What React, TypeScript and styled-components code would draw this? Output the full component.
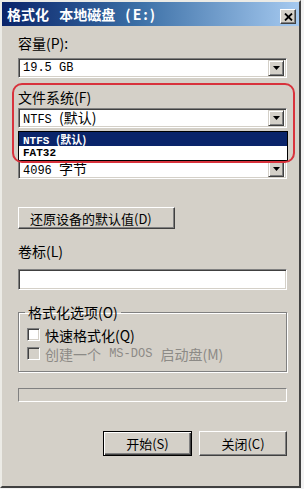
import React from 'react';
import styled, { createGlobalStyle } from 'styled-components';

const CJK = `"Noto Sans CJK SC", "Liberation Sans", sans-serif`;
const MONO = `"Liberation Mono", "Noto Sans CJK SC", monospace`;

const Global = createGlobalStyle`
  html, body { margin: 0; padding: 0; background: #f2f2f2; }
  body { width: 304px; height: 489px; overflow: hidden; }
`;

const Window = styled.div`
  position: relative;
  box-sizing: border-box;
  width: 301px;
  height: 488px;
  background: #d4d0c8;
  border: 2px solid;
  border-color: #ecebe6 #404040 #404040 #ecebe6;
  display: flex;
  flex-direction: column;
  font-family: ${CJK};
  font-size: 14px;
  color: #000;
`;

const TitleBar = styled.div`
  height: 24px;
  display: flex;
  align-items: center;
  justify-content: space-between;
  padding: 0 3px 0 5px;
  background: linear-gradient(to right, #0a246a 0%, #3a6ea5 45%, #a6caf0 100%);
`;

const Title = styled.span`
  color: #fff;
  font-weight: bold;
  font-size: 14px;
  line-height: 24px;
  white-space: pre;
  word-spacing: 7px;
`;

const TitleDrive = styled.span`
  letter-spacing: 2px;
`;

const CloseButton = styled.div`
  box-sizing: border-box;
  width: 16px;
  height: 15px;
  margin-top: 5px;
  background: #d4d0c8;
  border: 1px solid;
  border-color: #fff #404040 #404040 #fff;
  box-shadow: inset -1px -1px #808080;
  display: flex;
  align-items: center;
  justify-content: center;
`;

const Content = styled.div`
  display: flex;
  flex-direction: column;
  padding: 0 12px 0 16px;
`;

const Label = styled.div<{ $mt: number }>`
  margin-top: ${(p) => p.$mt}px;
  height: 16px;
  line-height: 16px;
  font-size: 14px;
  white-space: pre;
`;

const Spacer = styled.div<{ $h: number }>`
  height: ${(p) => p.$h}px;
`;

const Sunken = styled.div`
  box-sizing: border-box;
  border: 1px solid;
  border-color: #808080 #fff #fff #808080;
  box-shadow: inset 1px 1px #404040, inset -1px -1px #d4d0c8;
  background: #fff;
`;

const ComboBox = styled(Sunken)<{ $mt: number }>`
  position: relative;
  margin-top: ${(p) => p.$mt}px;
  height: 20px;
  display: flex;
  align-items: center;
  padding: 2px 2px 2px 4px;
`;

const ComboText = styled.span`
  flex: 1;
  font-family: ${MONO};
  font-size: 12px;
  line-height: 16px;
  white-space: pre;
`;

const Cjk = styled.span<{ $size?: number }>`
  font-family: ${CJK};
  font-size: ${(p) => p.$size ?? 14}px;
`;

const DropButton = styled.div`
  box-sizing: border-box;
  width: 16px;
  height: 16px;
  background: #d4d0c8;
  border: 1px solid;
  border-color: #d4d0c8 #404040 #404040 #d4d0c8;
  box-shadow: inset 1px 1px #fff, inset -1px -1px #808080;
  display: flex;
  align-items: center;
  justify-content: center;
`;

const DropList = styled.div`
  position: absolute;
  left: -1px;
  right: -2px;
  top: 22px;
  z-index: 2;
  background: #fff;
  border: 1px solid #000;
  display: flex;
  flex-direction: column;
`;

const ListRow = styled.div<{ $selected?: boolean }>`
  height: 14px;
  line-height: 14px;
  padding-left: 4px;
  background: ${(p) => (p.$selected ? '#0a246a' : '#fff')};
  color: ${(p) => (p.$selected ? '#fff' : '#000')};
  font-family: ${MONO};
  font-size: 11px;
  font-weight: bold;
  white-space: pre;
`;

const Button = styled.div<{ $mt?: number; $w: number; $h: number; $default?: boolean }>`
  box-sizing: border-box;
  margin-top: ${(p) => p.$mt ?? 0}px;
  width: ${(p) => p.$w}px;
  height: ${(p) => p.$h}px;
  background: #d4d0c8;
  border: 1px solid;
  border-color: ${(p) => (p.$default ? '#000' : '#fff #404040 #404040 #fff')};
  box-shadow: ${(p) =>
    p.$default
      ? 'inset 1px 1px #fff, inset -1px -1px #404040, inset -2px -2px #808080'
      : 'inset -1px -1px #808080'};
  display: flex;
  align-items: center;
  justify-content: center;
  font-size: 13px;
  white-space: pre;
`;

const ResetButton = styled(Button)`
  justify-content: flex-start;
  padding-left: 11px;
`;

const TextInput = styled(Sunken)`
  margin-top: 10px;
  height: 21px;
`;

const GroupBox = styled.fieldset`
  box-sizing: border-box;
  margin: 14px 0 0;
  height: 68px;
  padding: 6px 8px 0 8px;
  border: 1px solid #808080;
  box-shadow: inset 1px 1px #fff, 1px 1px #fff;
  display: flex;
  flex-direction: column;
`;

const Legend = styled.legend`
  padding: 0 3px;
  margin-left: -2px;
  height: 16px;
  line-height: 16px;
  font-size: 14px;
`;

const CheckRow = styled.div<{ $disabled?: boolean; $mt: number }>`
  margin-top: ${(p) => p.$mt}px;
  height: 17px;
  display: flex;
  align-items: center;
  gap: 5px;
  color: ${(p) => (p.$disabled ? '#8c8a86' : '#000')};
  white-space: pre;
`;

const CheckBox = styled.div<{ $disabled?: boolean }>`
  box-sizing: border-box;
  width: 13px;
  height: 13px;
  border: 1px solid;
  border-color: #808080 #fff #fff #808080;
  box-shadow: inset 1px 1px #404040, inset -1px -1px #d4d0c8;
  background: ${(p) => (p.$disabled ? '#d4d0c8' : '#fff')};
`;

const Mono = styled.span`
  font-family: ${MONO};
  font-size: 12px;
`;

const Progress = styled.div`
  box-sizing: border-box;
  margin-top: 16px;
  height: 14px;
  border: 1px solid;
  border-color: #808080 #fff #fff #808080;
  background: #d4d0c8;
`;

const ButtonRow = styled.div`
  margin-top: 29px;
  display: flex;
  justify-content: flex-end;
  gap: 7px;
`;

const Annotation = styled.div`
  position: absolute;
  left: 10px;
  top: 81px;
  width: 283px;
  height: 80px;
  box-sizing: border-box;
  border: 2px solid #d8323c;
  border-radius: 10px;
  z-index: 3;
  pointer-events: none;
`;

const Arrow = () => (
  <svg width="7" height="4" viewBox="0 0 7 4">
    <path d="M0 0H7L3.5 4Z" fill="#000" />
  </svg>
);

const CloseX = () => (
  <svg width="9" height="8" viewBox="0 0 9 8">
    <path d="M1 0.5L8 7.5M8 0.5L1 7.5" stroke="#000" strokeWidth="1.8" />
  </svg>
);

export default function App() {
  return (
    <>
      <Global />
      <Window>
        <TitleBar>
          <Title>
            格式化 本地磁盘 <TitleDrive>(E:)</TitleDrive>
          </Title>
          <CloseButton>
            <CloseX />
          </CloseButton>
        </TitleBar>
        <Content>
          <Label $mt={9}>容量(P):</Label>
          <ComboBox $mt={7}>
            <ComboText>19.5 GB</ComboText>
            <DropButton>
              <Arrow />
            </DropButton>
          </ComboBox>
          <Label $mt={11}>文件系统(F)</Label>
          <ComboBox $mt={3}>
            <ComboText>
              NTFS <Cjk>(默认)</Cjk>
            </ComboText>
            <DropButton>
              <Arrow />
            </DropButton>
            <DropList>
              <ListRow $selected>
                NTFS <Cjk $size={11}>(默认)</Cjk>
              </ListRow>
              <ListRow>FAT32</ListRow>
            </DropList>
          </ComboBox>
          <Spacer $h={28} />
          <ComboBox $mt={3}>
            <ComboText>
              4096 <Cjk>字节</Cjk>
            </ComboText>
            <DropButton>
              <Arrow />
            </DropButton>
          </ComboBox>
          <ResetButton $mt={28} $w={157} $h={22}>
            还原设备的默认值(D)
          </ResetButton>
          <Label $mt={14}>卷标(L)</Label>
          <TextInput />
          <GroupBox>
            <Legend>格式化选项(O)</Legend>
            <CheckRow $mt={0}>
              <CheckBox />
              快速格式化(Q)
            </CheckRow>
            <CheckRow $mt={2} $disabled>
              <CheckBox $disabled />
              创建一个 <Mono>MS-DOS</Mono> 启动盘(M)
            </CheckRow>
          </GroupBox>
          <Progress />
          <ButtonRow>
            <Button $w={89} $h={25} $default>
              开始(S)
            </Button>
            <Button $w={88} $h={25}>
              关闭(C)
            </Button>
          </ButtonRow>
        </Content>
        <Annotation />
      </Window>
    </>
  );
}
